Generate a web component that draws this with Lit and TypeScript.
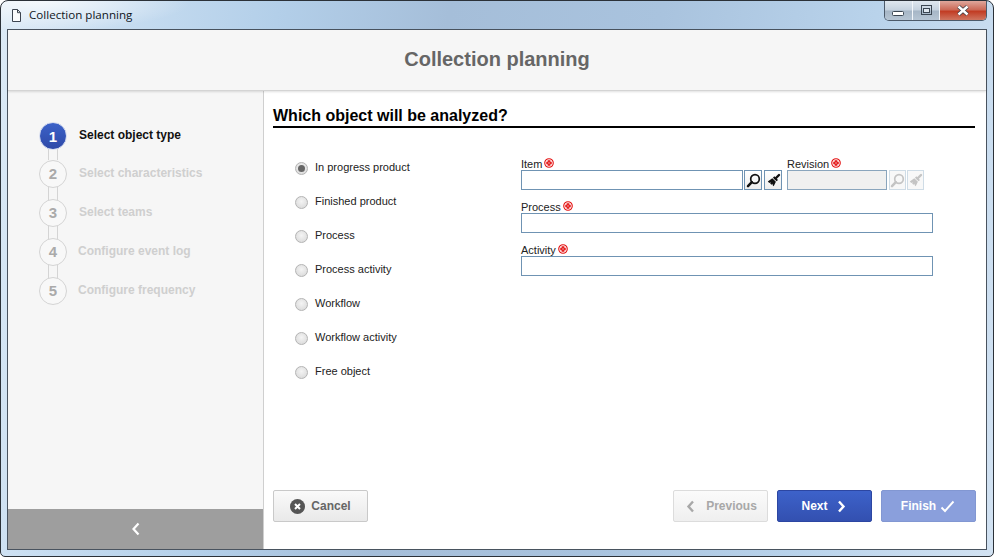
import { LitElement, html, css, svg } from "lit";
import { customElement } from "lit/decorators.js";

const req = html`<svg class="req" viewBox="0 0 11 11" width="10" height="10"><circle cx="5.5" cy="5.5" r="4.7" fill="#fff" stroke="#e41010" stroke-width="1.2"/><path d="M4 2.500h3v1.500h1.500v3H7v1.500H4V7H2.500V4H4z" fill="#e41010"/><path d="M5.500 4v3M4 5.500h3" stroke="#f09090" stroke-width=".8"/></svg>`;

const lens = (c: string) => svg`<circle cx="9" cy="6" r="4.300" fill="none" stroke="${c}" stroke-width="1.700"/><path d="M5.800 9.200L2 13.200" stroke="${c}" stroke-width="2.500" stroke-linecap="round" fill="none"/>`;
const brush = (c: string) => svg`<path d="M9.500 5.500L13 2" stroke="${c}" stroke-width="2.400" stroke-linecap="round"/><path d="M8.300 3.300l3.700 3.600-1.400 1.400-3.700-3.600z" fill="${c}"/><path d="M6.300 5.300l3.600 3.500-2.200 4.500-1.200-1.200 .2-1.400-1.300 1-1.200-1.100 .6-1.400-1.500 .7-1.500-1.500z" fill="${c}"/>`;

@customElement("app-root")
export class AppRoot extends LitElement {
  static styles = css`
    :host { display: block; width: 994px; height: 557px; font-family: "Liberation Sans", Arial, sans-serif; overflow: hidden; }
    .window { box-sizing: border-box; width: 994px; height: 557px; display: flex; flex-direction: column; padding: 0 6px 6px; border: 1px solid #2b3138; border-radius: 8px 8px 5px 5px;
      background: radial-gradient(ellipse 150px 30px at 40px 0, rgba(255,255,255,.75), rgba(255,255,255,0)), linear-gradient(98deg, #dceaf6 0, #c6dcf0 12%, #b3cfe9 26%, #a5bed9 42%, #a9c3de 62%, #b9d3eb 82%, #d2e2f2 100%); }
    .titlebar { height: 28px; flex: none; display: flex; align-items: flex-start; }
    .doc { margin: 7px 0 0 3px; flex: none; }
    .wintitle { font-family: "Open Sans", sans-serif; font-size: 11.6px; line-height: 14px; margin: 7px 0 0 6px; color: #10161c; }
    .controls { margin-left: auto; display: flex; height: 20px; border: 1px solid #4c5a6a; border-top: none; border-radius: 0 0 5px 5px; overflow: hidden; box-sizing: border-box; }
    .wc { display: flex; align-items: center; justify-content: center; box-sizing: border-box; height: 100%; background: linear-gradient(#dfe7ef 0, #c5d2df 48%, #a6b6c6 52%, #b6c5d4 100%); border-right: 1px solid #f2f6fa; }
    .wc.min { width: 28px; } .wc.max { width: 27px; }
    .wc.close { width: 46px; border: none; background: linear-gradient(#dfa79c 0, #cc6a58 45%, #c23d24 55%, #cf7560 100%); }
    .ic-min { margin-top: 7px; }
    .frame { flex: 1; min-height: 0; display: flex; flex-direction: column; background: #fff; border: 1px solid #49535f; }
    .header { flex: none; box-sizing: border-box; height: 61px; padding-bottom: 2px; background: #f6f6f6; display: flex; align-items: center; justify-content: center; font-size: 20px; font-weight: bold; color: #666; border-bottom: 1px solid #d4d4d4; box-shadow: 0 1px 2px rgba(0,0,0,.12); position: relative; }
    .body { flex: 1; min-height: 0; display: flex; }
    .side { flex: none; width: 256px; box-sizing: border-box; background: #f6f6f6; border-right: 1px solid #cfcfcf; display: flex; flex-direction: column; }
    .steps { flex: 1; padding: 31px 0 0 31px; }
    .step { position: relative; display: flex; align-items: center; height: 39px; font-size: 12px; font-weight: bold; color: #cfcfcf; }
    .step.active { height: 28px; margin-bottom: 4px; color: #111; }
    .step .n { position: relative; z-index: 1; box-sizing: border-box; width: 28px; height: 28px; flex: none; border: 1px solid #d4d4d4; border-radius: 50%; background: #f8f8f8; display: flex; align-items: center; justify-content: center; font-size: 15px; color: #aaa; }
    .step.active .n { background: linear-gradient(#3c62c8, #2e49a8); border-color: #d5dcf0; color: #fff; }
    .step .t { margin-left: 12px; margin-top: -2px; }
    .step.sh .t { margin-left: 11px; }
    .step.active .t { margin-top: -3px; }
    .step:not(:last-child)::after { content: ""; position: absolute; left: 9px; top: 26px; width: 8px; height: 26px; border: 1px solid #d4d4d4; border-width: 0 1px; background: #f6f6f6; }
    .step.active::after { top: 24px; height: 14px; }
    .collapse { flex: none; height: 40px; background: #9e9e9e; display: flex; align-items: center; justify-content: center; }
    .main { flex: 1; min-width: 0; box-sizing: border-box; padding: 0 10px 27px 9px; display: flex; flex-direction: column; }
    h1 { margin: 0 1px 0 0; box-sizing: border-box; height: 37px; padding: 16px 0 0; font-size: 16px; line-height: 18px; font-weight: bold; color: #000; border-bottom: 2px solid #000; }
    .cols { flex: 1; display: flex; min-height: 0; }
    .radios { flex: none; width: 248px; box-sizing: border-box; padding: 23px 0 0 22px; }
    .radio { height: 34px; display: flex; align-items: center; font-size: 11px; color: #222; }
    .radio span:last-child { margin-top: -2px; }
    .dot { box-sizing: border-box; width: 13px; height: 13px; margin-right: 7px; border-radius: 50%; border: 1px solid #b4b4b4; background: radial-gradient(circle at 50% 40%, #f4f4f4, #d6d6d6); display: flex; align-items: center; justify-content: center; flex: none; }
    .dot.on::after { content: ""; width: 7px; height: 7px; border-radius: 50%; background: #666; }
    .form { padding-top: 29px; width: 412px; display: flex; flex-direction: column; gap: 10px; }
    .label { display: flex; align-items: center; height: 13px; font-size: 11px; line-height: 13px; color: #222; gap: 2px; padding-top: 1px; box-sizing: border-box; }
    .req { flex: none; margin-top: -2px; }
    .input { box-sizing: border-box; height: 20px; border: 1px solid #6f93b3; background: #fff; }
    .input.off { background: #f0f0f0; border-color: #8aa5bd; }
    .rowtop { display: flex; }
    .f-item { width: 222px; flex: none; }
    .f-rev { width: 100px; flex: none; }
    .tools { display: flex; align-items: flex-end; flex: none; }
    .tools.a { gap: 2px; margin: 0 5px 0 1px; }
    .tools.b { gap: 1px; margin-left: 2px; }
    .tb { box-sizing: border-box; width: 18px; height: 20px; border: 1px solid #6f93b3; background: linear-gradient(#fff, #eee); display: flex; align-items: center; justify-content: center; }
    .tb.off { width: 17px; border-color: #cfdce6; background: #f8f8f8; }
    .footer { flex: none; display: flex; align-items: center; gap: 9px; }
    .btn { box-sizing: border-box; width: 95px; height: 32px; border-radius: 2px; border: 1px solid #c9c9c9; background: linear-gradient(#fafafa, #e9e9e9); display: flex; align-items: center; justify-content: center; gap: 6px; font-size: 12px; font-weight: bold; color: #666; }
    .btn.prev { margin-left: auto; color: #a8a8a8; border-color: #dcdcdc; background: linear-gradient(#fbfbfb, #efefef); gap: 11px; padding-left: 2px; }
    .btn.next { background: linear-gradient(#3d62ca, #3350b0); border-color: #2c46a2; color: #fff; gap: 9px; padding-right: 2px; }
    .btn.finish { background: #8a9fdc; border-color: #8297d2; color: #fff; gap: 4px; padding-right: 1px; }
  `;

  render() {
    const radios = ["In progress product", "Finished product", "Process", "Process activity", "Workflow", "Workflow activity", "Free object"];
    const steps = ["Select characteristics", "Select teams", "Configure event log", "Configure frequency"];
    return html`<div class="window">
      <div class="titlebar">
        <svg class="doc" width="13" height="15" viewBox="0 0 13 15"><path d="M2.500 1.500h5l3 3.200v8.800h-8z" fill="#fbfcfd" stroke="#3d4550"/><path d="M7.500 1.500v3.200h3" fill="none" stroke="#3d4550"/></svg>
        <div class="wintitle">Collection planning</div>
        <div class="controls">
          <div class="wc min"><svg class="ic-min" width="13" height="8" viewBox="0 0 13 8"><rect x=".5" y="1.500" width="11" height="4" rx="1" fill="#fff" stroke="#3b4652"/></svg></div>
          <div class="wc max"><svg width="13" height="11" viewBox="0 0 13 11"><rect x="1.500" y=".5" width="10" height="9" fill="none" stroke="#3b4652"/><rect x="3.500" y="3.500" width="6" height="4" fill="#dfe7ef" stroke="#3b4652"/></svg></div>
          <div class="wc close"><svg width="14" height="11" viewBox="0 0 14 11"><path d="M2.500 1.500L11.500 9.500M11.500 1.500L2.500 9.500" stroke="#3a3f47" stroke-width="4"/><path d="M2.500 1.500L11.500 9.500M11.500 1.500L2.500 9.500" stroke="#fff" stroke-width="2.400"/></svg></div>
        </div>
      </div>
      <div class="frame">
        <div class="header">Collection planning</div>
        <div class="body">
          <div class="side">
            <div class="steps">
              <div class="step active"><span class="n">1</span><span class="t">Select object type</span></div>
              ${steps.map((s, i) => html`<div class="step ${i > 1 ? "sh" : ""}"><span class="n">${i + 2}</span><span class="t">${s}</span></div>`)}
            </div>
            <div class="collapse"><svg width="10" height="14" viewBox="0 0 10 14"><path d="M7.500 1.500L2.500 7l5 5.500" fill="none" stroke="#fff" stroke-width="2.200"/></svg></div>
          </div>
          <div class="main">
            <h1>Which object will be analyzed?</h1>
            <div class="cols">
              <div class="radios">
                ${radios.map((r, i) => html`<div class="radio"><span class="dot ${i === 0 ? "on" : ""}"></span><span>${r}</span></div>`)}
              </div>
              <div class="form">
                <div class="rowtop">
                  <div class="f-item"><div class="label">Item${req}</div><div class="input"></div></div>
                  <div class="tools a">
                    <div class="tb"><svg width="15" height="15" viewBox="0 0 15 15">${lens("#111")}</svg></div>
                    <div class="tb"><svg width="15" height="15" viewBox="0 0 15 15">${brush("#111")}</svg></div>
                  </div>
                  <div class="f-rev"><div class="label">Revision${req}</div><div class="input off"></div></div>
                  <div class="tools b">
                    <div class="tb off"><svg width="15" height="15" viewBox="0 0 15 15">${lens("#c4c4c4")}</svg></div>
                    <div class="tb off"><svg width="15" height="15" viewBox="0 0 15 15">${brush("#c4c4c4")}</svg></div>
                  </div>
                </div>
                <div><div class="label">Process${req}</div><div class="input"></div></div>
                <div><div class="label">Activity${req}</div><div class="input"></div></div>
              </div>
            </div>
            <div class="footer">
              <div class="btn"><svg width="15" height="15" viewBox="0 0 15 15"><circle cx="7.500" cy="7.500" r="7.500" fill="#555"/><path d="M5 5l5 5M10 5l-5 5" stroke="#fff" stroke-width="2"/></svg>Cancel</div>
              <div class="btn prev"><svg width="9" height="13" viewBox="0 0 9 13"><path d="M7 1.500L2.500 6.500 7 11.500" fill="none" stroke="#a8a8a8" stroke-width="2.400"/></svg>Previous</div>
              <div class="btn next">Next<svg width="9" height="13" viewBox="0 0 9 13"><path d="M2 1.500L6.500 6.500 2 11.500" fill="none" stroke="#fff" stroke-width="2.400"/></svg></div>
              <div class="btn finish">Finish<svg width="15" height="13" viewBox="0 0 15 13"><path d="M1.500 7.500L5 11 13.500 1.500" fill="none" stroke="#fff" stroke-width="1.900"/></svg></div>
            </div>
          </div>
        </div>
      </div>
    </div>`;
  }
}
